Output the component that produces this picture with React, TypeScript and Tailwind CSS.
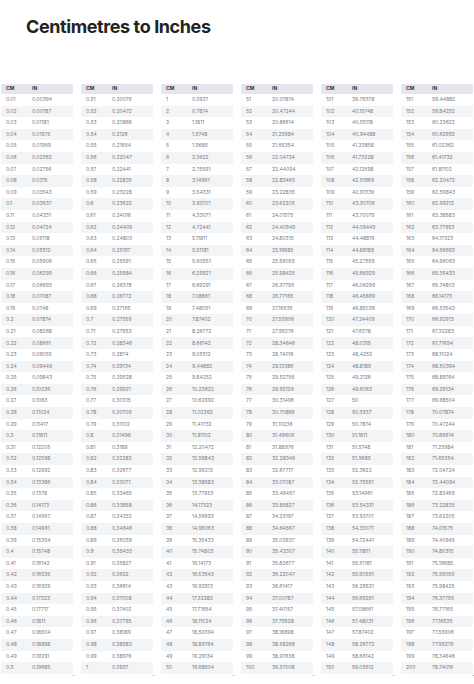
import React from 'react';

const fmt = (n: number, d: number) => parseFloat(n.toFixed(d)).toString();

// each block: [start, step] for 50 rows
const blocks: { start: number; step: number; dec: number }[] = [
  { start: 0.01, step: 0.01, dec: 2 },
  { start: 0.51, step: 0.01, dec: 2 },
  { start: 1, step: 1, dec: 0 },
  { start: 51, step: 1, dec: 0 },
  { start: 101, step: 1, dec: 0 },
  { start: 151, step: 1, dec: 0 },
];

const ConvTable: React.FC<{ start: number; step: number; dec: number }> = ({ start, step, dec }) => {
  const rows = Array.from({ length: 50 }, (_, i) => {
    const cm = parseFloat((start + i * step).toFixed(dec));
    return { cm: fmt(cm, dec), inch: fmt(cm / 2.54, 5) };
  });
  return (
    <div className="flex flex-col relative">
      <div className="flex items-center h-[10px] bg-[#e4e6ec] rounded-t-[1px] text-[5px] font-bold text-[#2e2f36]">
        <span className="w-[31px] pl-[5px]">CM</span>
        <span>IN</span>
      </div>
      {rows.map((r, i) => (
        <div
          key={r.cm}
          className={`flex items-center h-[11.6px] text-[5px] text-[#7a7c83] ${i % 2 === 1 ? 'bg-[#f3f4f6]' : 'bg-white'}`}
        >
          <span className="w-[31px] pl-[5px]">{r.cm}</span>
          <span>{r.inch}</span>
        </div>
      ))}
      <span className="absolute -right-[1px] -bottom-[2px] w-[1px] h-[1px] bg-[#9aa0aa]" />
    </div>
  );
};

export default function App() {
  return (
    <div className="w-[474px] h-[684px] bg-white overflow-hidden" style={{ fontFamily: 'Inter, "Liberation Sans", sans-serif' }}>
      <h1 className="pl-[26px] pt-[15px] h-[84px] text-[18px] leading-[24px] font-bold tracking-[-0.4px] text-[#232323]">
        Centimetres to Inches
      </h1>
      <div className="grid grid-cols-6 gap-x-[8px] px-[1px]">
        {blocks.map((b) => (
          <ConvTable key={b.start} {...b} />
        ))}
      </div>
    </div>
  );
}
